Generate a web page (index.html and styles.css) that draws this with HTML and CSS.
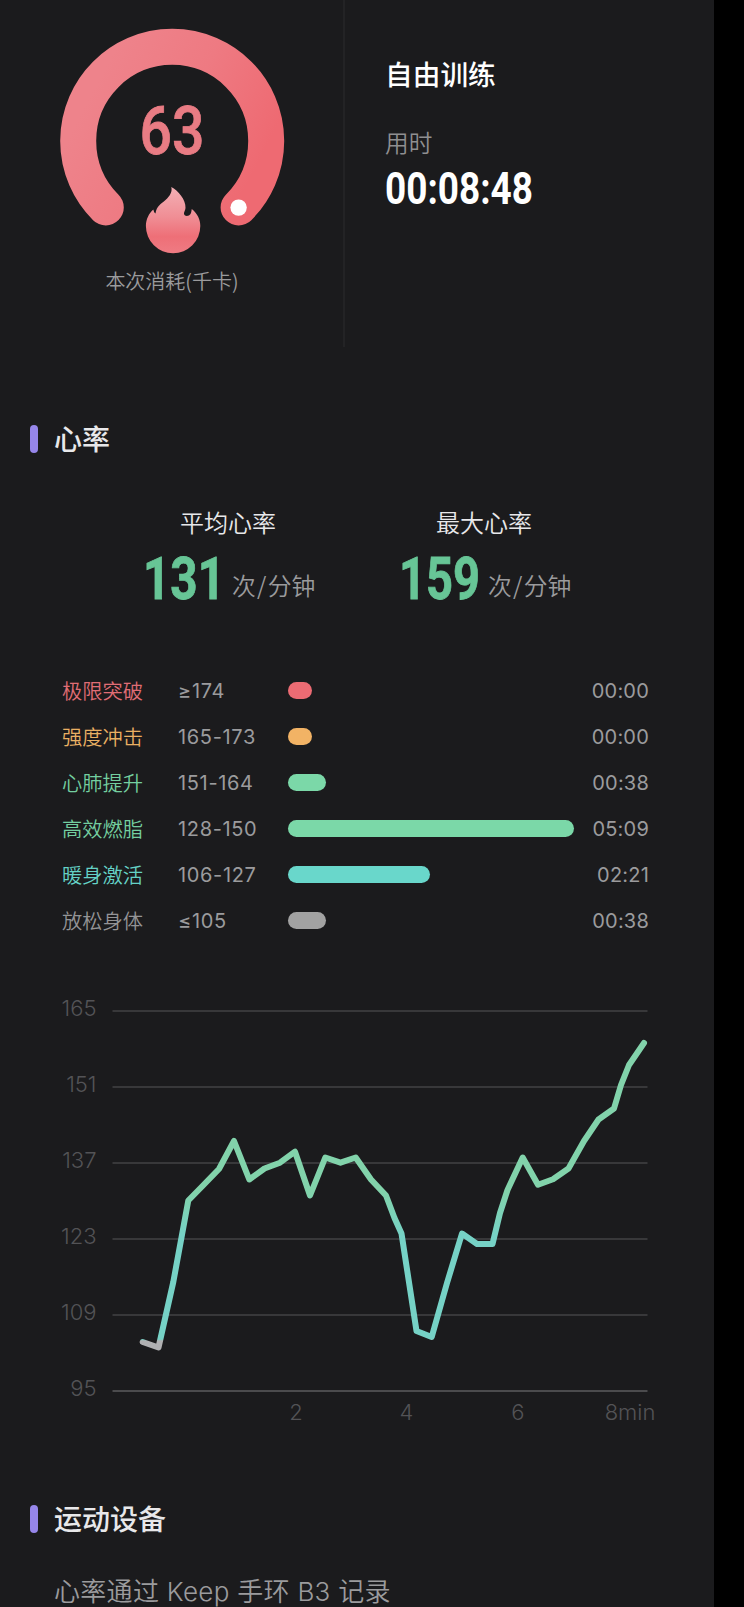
FILE: index.html
```html
<!DOCTYPE html>
<html lang="zh-CN">
<head>
<meta charset="utf-8">
<title>自由训练</title>
<link rel="stylesheet" href="styles.css">
</head>
<body>
<main class="panel">
  <section class="summary">
    <div class="calories">
      <svg class="ring" width="226" height="226" viewBox="59 28 226 226">
        <defs>
          <linearGradient id="arc" x1="0" y1="0.45" x2="0.9" y2="0.85">
            <stop offset="0" stop-color="#ee838b"/>
            <stop offset="0.5" stop-color="#ee7a82"/>
            <stop offset="1" stop-color="#ee6a72"/>
          </linearGradient>
          <linearGradient id="fire" x1="0" y1="0" x2="0" y2="1">
            <stop offset="0" stop-color="#f3b0b5"/>
            <stop offset="0.45" stop-color="#f08e95"/>
            <stop offset="0.75" stop-color="#ee6f77"/>
            <stop offset="1" stop-color="#ef7b83"/>
          </linearGradient>
        </defs>
        <path d="M105.8 207.4A94 94 0 1 1 238.6 207.4" fill="none" stroke="url(#arc)" stroke-width="36" stroke-linecap="round"/>
        <circle cx="238.6" cy="207.6" r="8.2" fill="#fff"/>
        <text class="num kcal" x="139.5" y="153.5" textLength="65" lengthAdjust="spacingAndGlyphs">63</text>
        <path d="M171.3 187C178 190.5 186 199.5 185.5 208C185.3 210.5 183.8 212 184 214C184.5 216.5 189 216.500 190.500 214C191.700 212 191.300 210.500 191.800 209C197.500 213.500 200.300 219.500 200.300 226A27.200 27.200 0 0 1 145.900 226C145.900 219.500 149 213 153.300 209.500C153.800 211 154 212.500 155.500 213.500C156.500 206 161 204 165.500 200C170.300 195.800 172.500 191.500 171.300 187Z" fill="url(#fire)"/>
      </svg>
      <p class="ring-label">本次消耗(千卡)</p>
    </div>
    <div class="session">
      <h1 class="session-title">自由训练</h1>
      <p class="session-label">用时</p>
      <svg class="session-time" width="154" height="52" viewBox="-2 -8 154 52">
        <text class="num time" x="-1" y="33" textLength="148" lengthAdjust="spacingAndGlyphs">00:08:48</text>
      </svg>
    </div>
  </section>

  <h2 class="heading">心率</h2>

  <section class="stats">
    <div class="stat">
      <p class="stat-label">平均心率</p>
      <div class="stat-value">
        <svg width="82" height="70" viewBox="-4 -12 82 70"><text class="num bpm" x="-2" y="44" textLength="82" lengthAdjust="spacingAndGlyphs">131</text></svg>
        <span class="unit">次<span class="slash">/</span>分钟</span>
      </div>
    </div>
    <div class="stat">
      <p class="stat-label">最大心率</p>
      <div class="stat-value">
        <svg width="82" height="70" viewBox="-4 -12 82 70"><text class="num bpm" x="-2" y="44" textLength="81" lengthAdjust="spacingAndGlyphs">159</text></svg>
        <span class="unit">次<span class="slash">/</span>分钟</span>
      </div>
    </div>
  </section>

  <section class="zones">
    <div class="zone red"><span class="name">极限突破</span><span class="range">≥174</span><i class="bar" style="width:24px"></i><span class="dur">00:00</span></div>
    <div class="zone orange"><span class="name">强度冲击</span><span class="range">165-173</span><i class="bar" style="width:24px"></i><span class="dur">00:00</span></div>
    <div class="zone green"><span class="name">心肺提升</span><span class="range">151-164</span><i class="bar" style="width:38px"></i><span class="dur">00:38</span></div>
    <div class="zone green"><span class="name">高效燃脂</span><span class="range">128-150</span><i class="bar" style="width:286px"></i><span class="dur">05:09</span></div>
    <div class="zone teal"><span class="name">暖身激活</span><span class="range">106-127</span><i class="bar" style="width:142px"></i><span class="dur">02:21</span></div>
    <div class="zone gray"><span class="name">放松身体</span><span class="range">≤105</span><i class="bar" style="width:38px"></i><span class="dur">00:38</span></div>
  </section>

  <svg class="chart" width="714" height="450" viewBox="0 990 714 450">
    <defs>
      <linearGradient id="hr" gradientUnits="userSpaceOnUse" x1="0" y1="1000" x2="0" y2="1400">
        <stop offset="0" stop-color="#82d3ab"/>
        <stop offset="0.48" stop-color="#82d3ab"/>
        <stop offset="0.59" stop-color="#76d2c6"/>
        <stop offset="0.848" stop-color="#76d2c6"/>
        <stop offset="0.852" stop-color="#b0b0b2"/>
        <stop offset="1" stop-color="#b0b0b2"/>
      </linearGradient>
    </defs>
    <path class="grid" d="M112.500 1011H647.500M112.500 1087H647.500M112.500 1163H647.500M112.500 1239H647.500M112.500 1315H647.500"/>
    <path class="grid base" d="M112.500 1391H647.500"/>
    <polyline class="line" points="142.700,1342 158.500,1347.500 173.300,1282 188.300,1200.500 203.500,1185 219,1169 234,1141 249.300,1179.500 264.500,1168.500 280,1162.700 295,1151.700 310,1195.500 325.300,1157.500 340.500,1162.700 355.700,1157.500 371,1179.500 386,1195.500 394.500,1218 401.500,1233.500 416.500,1331 431.700,1337 447,1283 462,1233.500 477,1244 492.500,1244 500,1213 507.500,1190 522.700,1157.500 538,1184.700 553,1179.300 568.500,1168.500 584,1141 598.500,1119.500 614,1108.500 621,1085 629,1065 644,1043"/>
    <g class="axis y">
      <text x="96.500" y="1016">165</text>
      <text x="96.500" y="1092">151</text>
      <text x="96.500" y="1168">137</text>
      <text x="96.500" y="1244">123</text>
      <text x="96.500" y="1320">109</text>
      <text x="96.500" y="1396">95</text>
    </g>
    <g class="axis x">
      <text x="296" y="1419.500">2</text>
      <text x="406.500" y="1419.500">4</text>
      <text x="517.800" y="1419.500">6</text>
      <text x="630" y="1419.500">8min</text>
    </g>
  </svg>

  <h2 class="heading device">运动设备</h2>
  <p class="device-text">心率通过 Keep 手环 B3 记录</p>
</main>
</body>
</html>
```
FILE: styles.css
```css
* { box-sizing: border-box; margin: 0; padding: 0; }
body {
  height: 1607px;
  overflow: hidden;
  background: #000;
  color: #9b9b9d;
  font-family: Inter, "Noto Sans CJK SC", sans-serif;
  font-weight: 300;
}
svg { display: block; overflow: visible; flex: none; }
.panel { width: 714px; height: 1607px; background: #1b1b1d; overflow: hidden; }

.summary { display: flex; height: 347px; }
.calories {
  width: 345px;
  padding: 28px 0 0 59px;
  border-right: 2px solid #232325;
}
.ring-label {
  width: 226px;
  margin-top: 13px;
  text-align: center;
  font: 350 20px/28px "Noto Sans CJK SC", sans-serif;
}
.num { font-family: Roboto, sans-serif; font-weight: 700; }
.kcal { font-size: 67px; font-weight: 500; fill: #e97c84; stroke: #e97c84; stroke-width: 0.8; }
.time { font-size: 44px; fill: #fff; }
.bpm { font-size: 58.500px; fill: #67c596; stroke: #67c596; stroke-width: 0.8; }

.session { padding: 53px 0 0 41px; }
.session-title { font: 500 27.700px/40px "Noto Sans CJK SC", sans-serif; color: #fff; margin-left: -1px; }
.session-label { margin-top: 32px; font: 350 23.700px/34px "Noto Sans CJK SC", sans-serif; margin-left: -1px; color: #8f8f91; }
.session-time { margin: 4px 0 0 -2px; }

.heading {
  display: flex;
  align-items: center;
  gap: 16px;
  height: 40px;
  margin: 72px 0 0 30px;
  font: 500 28px/40px "Noto Sans CJK SC", sans-serif;
  color: #e8e8ea;
  padding-bottom: 2px;
}
.heading::before { content: ""; width: 8px; height: 28px; border-radius: 4px; background: #9686ea; position: relative; top: 1px; }

.stats { display: flex; margin: 43px 0 0 141px; }
.stat { width: 256px; }
.stat-label { width: 165px; margin-left: 4.500px; text-align: center; font: 350 24px/40px "Noto Sans CJK SC", sans-serif; color: #e8e8ea; }
.stat-value { display: flex; align-items: flex-start; gap: 9px; height: 70px; margin-top: 1px; }
.unit { font: 350 23.800px/36px "Noto Sans CJK SC", sans-serif; padding-top: 24px; white-space: nowrap; }
.slash { padding: 0 1.300px; }

.zones { margin-top: 54px; padding-left: 62px; }
.zone { display: flex; align-items: center; width: 587px; height: 46px; }
.name { width: 116px; font: 350 20.300px/46px "Noto Sans CJK SC", sans-serif; color: var(--text); }
.range { width: 110px; font-size: 20px; font-weight: 400; letter-spacing: 0.650px; padding-top: 1px; }
.bar { height: 17px; border-radius: 8.500px; background: var(--bar); }
.dur { margin-left: auto; font-size: 20px; font-weight: 400; letter-spacing: 0.200px; padding-top: 1px; }
.red { --text: #e06d75; --bar: #ec6b73; }
.orange { --text: #e9b063; --bar: #f2b365; }
.green { --text: #74cfa0; --bar: #7bd8a8; }
.teal { --text: #65d2c6; --bar: #69d7cb; }
.gray { --text: #949496; --bar: #a2a2a2; }

.chart { margin-top: 47px; }
.grid { stroke: #38383a; stroke-width: 2; }
.base { stroke: #4b4b4d; }
.line { fill: none; stroke: url(#hr); stroke-width: 6; stroke-linecap: round; stroke-linejoin: round; }
.axis { font-size: 22px; fill: #535356; }
.y { text-anchor: end; }
.x { text-anchor: middle; }

.device { margin-top: 59px; }
.device-text { margin: 33px 0 0 54px; font: 350 26px/40px Inter, "Noto Sans CJK SC", sans-serif; letter-spacing: 0.300px; white-space: nowrap; }
```
